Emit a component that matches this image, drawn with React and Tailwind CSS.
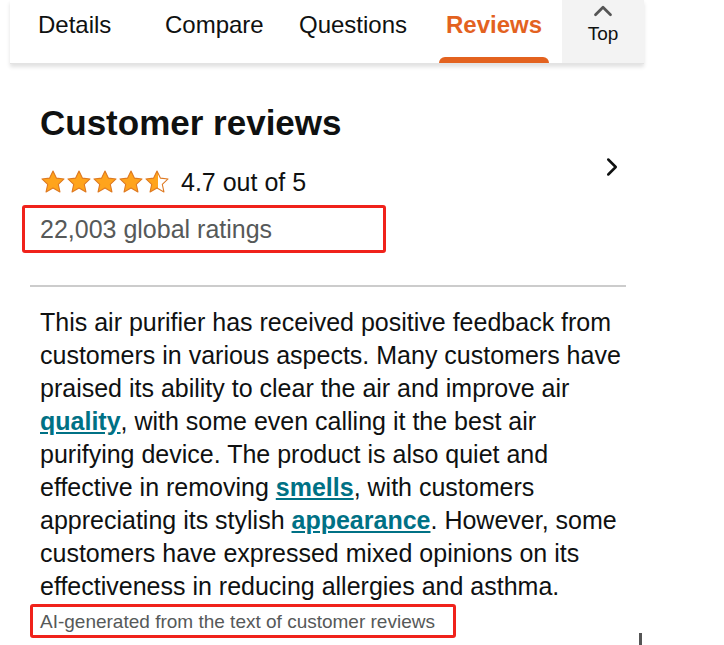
import { ChevronUp, ChevronRight } from 'lucide-react'

const tabs = ['Details', 'Compare', 'Questions', 'Reviews']

function Star({ fill = 1 }) {
    const id = `half-${fill}`
    return (
        <svg width="26" height="26" viewBox="0 0 24 24">
            <defs>
                <linearGradient id={id}>
                    <stop offset={`${fill * 100}%`} stopColor="#ffa41c" />
                    <stop offset={`${fill * 100}%`} stopColor="#ffffff" />
                </linearGradient>
            </defs>
            <path
                d="M12 1.8l3.1 6.6 7.1.8-5.3 4.9 1.5 7.1L12 17.6l-6.4 3.6 1.5-7.1L1.8 9.2l7.1-.8z"
                fill={`url(#${id})`}
                stroke="#de7921"
                strokeWidth="1"
                strokeLinejoin="round"
            />
        </svg>
    )
}

export default function App() {
    return (
        <div className="w-[724px] h-[645px] bg-white overflow-hidden relative font-['Liberation_Sans',Arial,sans-serif] text-[#0f1111]">

            {/* tab bar */}
            <div className="ml-[10px] w-[634px] h-[64px] flex items-stretch bg-white shadow-[0_3px_4px_rgba(0,0,0,0.12)] border-b border-[#e3e3e3]">
                <div className="flex-1 flex items-stretch pl-[28px]">
                    {tabs.map(tab => (
                        <div key={tab}
                            className={`relative flex items-start pt-[7px] text-[24px] ${tab === 'Reviews'
                                ? 'text-[#e3621f] font-bold w-[110px] justify-center ml-[8px]'
                                : tab === 'Details' ? 'w-[127px]' : tab === 'Compare' ? 'w-[134px]' : 'w-[132px]'}`}>
                            {tab}
                            {tab === 'Reviews' && (
                                <div className="absolute bottom-0 left-0 right-0 h-[6px] bg-[#e3621f] rounded-t-[6px]" />
                            )}
                        </div>
                    ))}
                </div>
                <div className="w-[82px] bg-[#f3f3f3] flex flex-col items-center -mt-[4px]">
                    <ChevronUp size={30} strokeWidth={2.2} className="text-[#555]" />
                    <span className="text-[19px] leading-none -mt-[2px]">Top</span>
                </div>
            </div>

            {/* header */}
            <div className="pl-[40px] pr-[100px] pt-[38px] relative">
                <h2 className="text-[35px] font-bold leading-[42px]">Customer reviews</h2>
                <div className="flex items-center gap-[11px] mt-[23px] h-[30px]">
                    <div className="flex">
                        <Star /><Star /><Star /><Star /><Star fill={0.55} />
                    </div>
                    <span className="text-[25px] leading-none">4.7 out of 5</span>
                </div>
                <ChevronRight size={30} strokeWidth={2} className="absolute right-[97px] top-[88px] text-[#0f1111]" />
            </div>

            <div className="ml-[22px] mt-[8px] w-[364px] h-[48px] border-[3px] border-[#f0221b] rounded-[3px] flex items-center pl-[15px]">
                <span className="text-[25px] text-[#565959] leading-none">22,003 global ratings</span>
            </div>

            <div className="ml-[30px] mt-[32px] w-[596px] h-[2px] bg-[#cccccc]" />

            {/* summary */}
            <p className="ml-[40px] mt-[19px] w-[592px] text-[25px] leading-[33px]">
                This air purifier has received positive feedback from customers in various aspects. Many customers have praised its ability to clear the air and improve air{' '}
                <a className="text-[#007185] font-bold underline">quality</a>, with some even calling it the best air purifying device. The product is also quiet and effective in removing{' '}
                <a className="text-[#007185] font-bold underline">smells</a>, with customers appreciating its stylish{' '}
                <a className="text-[#007185] font-bold underline">appearance</a>. However, some customers have expressed mixed opinions on its effectiveness in reducing allergies and asthma.
            </p>

            <div className="ml-[30px] mt-[1px] w-[426px] h-[34px] border-[3px] border-[#f0221b] rounded-[3px] flex items-center pl-[7px]">
                <span className="text-[19px] text-[#565959] leading-none">AI-generated from the text of customer reviews</span>
            </div>

            <div className="absolute left-[639px] top-[633px] w-[3px] h-[12px] bg-[#555]" />
        </div>
    )
}
